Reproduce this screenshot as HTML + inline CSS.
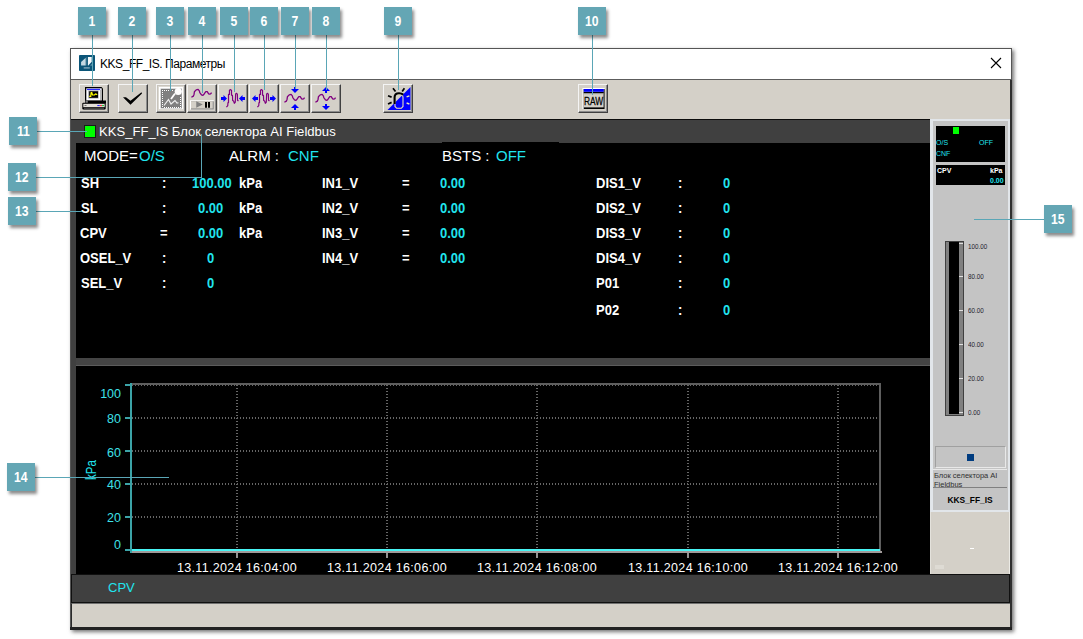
<!DOCTYPE html>
<html><head><meta charset="utf-8">
<style>
*{margin:0;padding:0;box-sizing:border-box}
html,body{width:1083px;height:639px;overflow:hidden;background:#fff;font-family:"Liberation Sans",sans-serif;position:relative}
.a{position:absolute}
.badge{position:absolute;width:28px;height:28px;background:#64a6b4;color:#fff;font-weight:bold;font-size:14px;line-height:28px;text-align:center;box-shadow:2px 3px 3px rgba(0,0,0,.45);z-index:20}
.badge span{display:inline-block;transform:scaleX(.87)}
.cl{position:absolute;background:#5aa6b6;z-index:19}
.win{position:absolute;left:70px;top:48px;width:942px;height:582px;border:1px solid #555;background:#d4d0c8;box-shadow:2px 2px 4px rgba(0,0,0,.55)}
.btn{position:absolute;top:84px;width:30px;height:29px;background:#d4d0c8;border-top:1px solid #f4f4f4;border-left:1px solid #f4f4f4;border-right:1px solid #404040;border-bottom:1px solid #404040;box-shadow:inset -1px -1px 0 #8c8c8c}
.btn svg{position:absolute;left:0;top:0}
.w{color:#fff}
.c{color:#20e4ee}
.hd{font-size:15px;position:absolute}
.bd{font-size:13px;font-weight:bold;position:absolute;line-height:15px;transform:scaleY(1.09);transform-origin:0 0}
.yl{position:absolute;color:#3ee0e8;font-size:12.5px;text-align:right;width:30px;line-height:14px}
.xl{position:absolute;color:#fff;font-size:12.5px;letter-spacing:.33px;line-height:14px;white-space:nowrap}
.tk{position:absolute;color:#1c1c2c;font-size:7.3px;line-height:8px;white-space:nowrap;transform:scaleX(.86);transform-origin:0 0}
</style></head><body>

<!-- window -->
<div class="win"></div>
<!-- title bar -->
<div class="a" style="left:71px;top:49px;width:940px;height:30px;background:#fff"></div>
<div class="a" style="left:71px;top:79px;width:940px;height:1px;background:#5c5c5c"></div>
<!-- app icon -->
<svg class="a" style="left:79px;top:55px" width="16" height="16" viewBox="0 0 16 16">
<rect width="16" height="16" rx="0.8" fill="#0b5578"/>
<path d="M2.07 7.08 L6.76 2.7 V10.5 H2.07 Z" fill="#c4d8e2"/>
<rect x="6.9" y="2.1" width="1.4" height="8.4" fill="#2e6e8c"/>
<path d="M8.95 2.07 H12.7 V6.8 L9.3 10.5 H8.95 Z" fill="#f4f8fa"/>
<path d="M11.3 10.5 L12.7 9.1 V10.5 Z" fill="#a8c4d2"/>
<rect x="4.7" y="12.2" width="6.1" height="1.4" fill="#7ea6bb"/>
</svg>
<div class="a" style="left:100px;top:57px;font-size:12px;letter-spacing:-0.45px;color:#000;line-height:15px">KKS_FF_IS. Параметры</div>
<!-- close X -->
<svg class="a" style="left:990px;top:57px" width="12" height="12" viewBox="0 0 12 12"><path d="M1 1 L11 11 M11 1 L1 11" stroke="#000" stroke-width="1.1"/></svg>

<!-- toolbar -->
<div class="a" style="left:71px;top:80px;width:939px;height:39px;background:#d4d0c8"></div>
<div class="a" style="left:1010px;top:80px;width:2px;height:549px;background:#303030"></div>

<!-- buttons -->
<div class="btn" style="left:79px"><svg width="28" height="27" viewBox="0 0 28 27">
<path d="M5 2 H21.5 L23 3.5 V17 H5 Z" fill="#000"/>
<rect x="6.3" y="3.3" width="15.4" height="12.4" fill="#fff"/>
<rect x="20" y="5" width="1.7" height="10.7" fill="#b8b8b8"/>
<rect x="7" y="3.8" width="13.2" height="1.3" fill="#2828ff"/>
<rect x="8.2" y="5.5" width="10.4" height="8" fill="#a8a8a8"/>
<rect x="9.2" y="6.3" width="8.8" height="6.5" fill="#000"/>
<path d="M9.25 11.4 H10.75 L11.1 7.75 L11.75 7.5 L12.5 10 H14.5 L15.5 9 L17.25 9.6" fill="none" stroke="#ffff00" stroke-width="1.2"/>
<rect x="5" y="15.5" width="21" height="3" fill="#000"/>
<rect x="5.5" y="15.5" width="2.3" height="2.5" fill="#808080"/>
<rect x="2.3" y="17.8" width="23.4" height="6.7" rx="1" fill="#000"/>
<rect x="3.3" y="18.8" width="21.4" height="3.4" fill="#e4e0d8"/>
<rect x="4.5" y="20" width="2" height=".8" fill="#606060"/>
<rect x="17.3" y="20" width="2.5" height="1.1" fill="#3030ff"/><rect x="19.8" y="20" width="2.2" height="1.1" fill="#ff3040"/><rect x="22" y="20" width="2" height="1.1" fill="#20d040"/>
<rect x="4" y="23.2" width="20" height="1.3" fill="#505050"/>
</svg></div>
<div class="btn" style="left:118px"><svg width="28" height="27" viewBox="0 0 28 27">
<path d="M4 12.25 H7 L11.5 15.75 L22.5 7.25 L23 8.5 L11.5 19.75 Z" fill="#000"/>
</svg></div>
<div class="btn" style="left:156px;background:#dcd9d2;box-shadow:inset -1px -1px 0 #8c8c8c, inset 1px 1px 0 #c8c4bc"><svg width="28" height="27" viewBox="0 0 28 27">
<rect x="2" y="2" width="24" height="22" fill="#fff"/>
<rect x="3.5" y="3.5" width="21.5" height="20" fill="#b8b8b8"/>
<rect x="4" y="4" width="20.5" height="19" fill="#7c7c7c"/>
<g fill="#fff" shape-rendering="crispEdges">
<path d="M5 5h1v1h-1zM7 5h1v1h-1zM9 5h1v1h-1zM11 5h1v1h-1zM13 5h1v1h-1zM15 5h1v1h-1z"/>
<path d="M5 7h1v1h-1zM5 9h1v1h-1zM5 11h1v1h-1zM5 13h1v1h-1zM5 15h1v1h-1zM5 17h1v1h-1zM5 19h1v1h-1zM5 21h1v1h-1z"/>
<path d="M7 22h1v1h-1zM9 22h1v1h-1zM11 22h1v1h-1zM13 22h1v1h-1zM15 22h1v1h-1zM17 22h1v1h-1zM19 22h1v1h-1zM21 22h1v1h-1zM23 22h1v1h-1z"/>
<path d="M23 12h1v1h-1zM23 14h1v1h-1zM23 16h1v1h-1zM23 18h1v1h-1zM23 20h1v1h-1z"/>
</g>
<rect x="6.5" y="6.5" width="16" height="15" fill="#808080"/>
<path d="M7 20.5 L11.5 14.5 L14 19 L18 15.5 L20 18 L21.5 17.75" fill="none" stroke="#f0f0f0" stroke-width="1.2"/>
<path d="M18 8.5 L14 14" stroke="#fff" stroke-width="1.8"/>
<circle cx="21.25" cy="6.5" r="3.6" fill="#fff"/>
</svg></div>
<div class="btn" style="left:187px"><svg width="28" height="27" viewBox="0 0 28 27">
<path d="M3.40 12.32 L5.32 11.12 L6.04 9.44 L6.40 6.80 L8.20 4.88 L10.12 4.40 L11.32 5.84 L11.80 7.52 L13.48 9.92 L14.93 10.40 L16.37 8.72 L17.80 6.56 L19.25 6.56 L20.20 8.24 L21.17 9.20 L22.60 8.96 L23.57 7.52" fill="none" stroke="#800080" stroke-width="1.3" stroke-linejoin="round"/>
<rect x="2" y="15.25" width="23.75" height="9.25" fill="#fff"/>
<rect x="3" y="16.25" width="22.75" height="8.25" fill="#808080"/>
<rect x="3" y="16.25" width="21.75" height="7.25" fill="#d4d0c8"/>
<path d="M8.25 16.25 L14.75 19.5 L8.25 22.75 Z" fill="#808080"/>
<rect x="17" y="17" width="2" height="5.75" fill="#000"/><rect x="20" y="17" width="2" height="5.75" fill="#000"/>
</svg></div>
<div class="btn" style="left:218px"><svg width="28" height="27" viewBox="0 0 28 27">
<path d="M7.44 22.05 L8.76 20.55 L8.95 17.54 L9.51 17.54 L9.51 9.46 L10.45 9.46 L10.45 5.32 L11.58 4.57 L12.52 5.51 L12.52 10.21 L13.46 10.40 L13.65 15.47 L14.59 16.04 L15.34 18.29 L16.28 17.17 L16.65 9.08 L17.59 8.33 L18.35 9.08 L18.53 15.29 L19.47 16.04" fill="none" stroke="#800080" stroke-width="1.2" stroke-linejoin="round"/>
<path d="M2 12 H4.5 V10 L8 13.5 L4.5 17 V15 H2 Z" fill="#0000ff"/>
<path d="M26 12 H23.5 V10 L20 13.5 L23.5 17 V15 H26 Z" fill="#0000ff"/>
</svg></div>
<div class="btn" style="left:249px"><svg width="28" height="27" viewBox="0 0 28 27">
<path d="M7.44 22.05 L8.76 20.55 L8.95 17.54 L9.51 17.54 L9.51 9.46 L10.45 9.46 L10.45 5.32 L11.58 4.57 L12.52 5.51 L12.52 10.21 L13.46 10.40 L13.65 15.47 L14.59 16.04 L15.34 18.29 L16.28 17.17 L16.65 9.08 L17.59 8.33 L18.35 9.08 L18.53 15.29 L19.47 16.04" fill="none" stroke="#800080" stroke-width="1.2" stroke-linejoin="round"/>
<path d="M8 12 H5.5 V10 L2 13.5 L5.5 17 V15 H8 Z" fill="#0000ff"/>
<path d="M20 12 H22.5 V10 L26 13.5 L22.5 17 V15 H20 Z" fill="#0000ff"/>
</svg></div>
<div class="btn" style="left:280px"><svg width="28" height="27" viewBox="0 0 28 27">
<path d="M3.40 17.32 L5.32 16.12 L6.04 14.44 L6.40 11.80 L8.20 9.88 L10.12 9.40 L11.32 10.84 L11.80 12.52 L13.48 14.92 L14.93 15.40 L16.37 13.72 L17.80 11.56 L19.25 11.56 L20.20 13.24 L21.17 14.20 L22.60 13.96 L23.57 12.52" fill="none" stroke="#800080" stroke-width="1.3" stroke-linejoin="round"/>
<path d="M13 2 H15 V4 H18 L14 8 L10 4 H13 Z" fill="#0000ff"/>
<path d="M13 25 H15 V23 H18 L14 19 L10 23 H13 Z" fill="#0000ff"/>
</svg></div>
<div class="btn" style="left:311px"><svg width="28" height="27" viewBox="0 0 28 27">
<path d="M3.40 17.32 L5.32 16.12 L6.04 14.44 L6.40 11.80 L8.20 9.88 L10.12 9.40 L11.32 10.84 L11.80 12.52 L13.48 14.92 L14.93 15.40 L16.37 13.72 L17.80 11.56 L19.25 11.56 L20.20 13.24 L21.17 14.20 L22.60 13.96 L23.57 12.52" fill="none" stroke="#800080" stroke-width="1.3" stroke-linejoin="round"/>
<path d="M13 8 H15 V6 H18 L14 2 L10 6 H13 Z" fill="#0000ff"/>
<path d="M13 19 H15 V21 H18 L14 25 L10 21 H13 Z" fill="#0000ff"/>
</svg></div>
<div class="btn" style="left:383px"><svg width="28" height="27" viewBox="0 0 28 27">
<path d="M26.5 2 V25 H3.5 Z" fill="#0000ff"/>
<path d="M11 21.5 V12.5 Q11 9.3 15 9.3 Q19 9.3 19 12.5 V21.5 L17.3 23.3 H12.7 Z" fill="none" stroke="#e8e0b8" stroke-width="1.1"/>
<path d="M10.6 19 V12.3 Q10.6 8.2 15 8.2 Q17.6 8.2 19.2 9.6" fill="none" stroke="#000" stroke-width="2.1"/>
<path d="M9 3.3 L11.5 6.5 M20.4 3.3 L18.2 6.5 M4 10.8 L7.6 12.1 M4 19 L7.6 17.4" stroke="#000" stroke-width="1.7"/>
<path d="M22.6 11.8 L25.4 10.8 M22.6 18 L25.4 19" stroke="#f0e8b0" stroke-width="1.4"/>
</svg></div>
<div class="btn" style="left:578px"><svg width="28" height="27" viewBox="0 0 28 27">
<rect x="3.4" y="3" width="22.2" height="21" fill="#fff"/>
<rect x="4.7" y="4" width="20.9" height="20" fill="#000"/>
<rect x="4.7" y="4" width="19.9" height="18.4" fill="#d4d0c8"/>
<rect x="4.7" y="4" width="20" height="2.8" fill="#0000ff"/>
<rect x="4.7" y="7" width="20" height="1.3" fill="#000"/>
<rect x="4.7" y="8.6" width="19.9" height=".6" fill="#a0a0a0"/>
<text x="14.5" y="19.9" font-family="Liberation Sans" font-size="11" text-anchor="middle" fill="#000" stroke="#000" stroke-width=".25" transform="translate(14.5 0) scale(.76 1) translate(-14.5 0)">RAW</text>
</svg></div>

<!-- main panel -->
<div class="a" style="left:71px;top:119px;width:939px;height:455px;background:#000"></div>
<div class="a" style="left:71px;top:119px;width:5px;height:455px;background:#404040"></div>
<div class="a" style="left:76px;top:119px;width:854px;height:24px;background:#404040"></div>
<div class="a" style="left:71px;top:119px;width:859px;height:1px;background:#0c0c0c"></div>
<div class="a" style="left:76px;top:358px;width:854px;height:8px;background:#444;border-bottom:1px solid #5c5c5c"></div>
<div class="a" style="left:442px;top:142px;width:117px;height:1px;background:#000"></div>
<div class="a" style="left:84px;top:125px;width:12px;height:13px;background:#00ff00;border:1px solid #1a1a1a"></div>
<div class="a w" style="left:99px;top:124px;font-size:13.1px;line-height:15px">KKS_FF_IS Блок селектора AI Fieldbus</div>

<div class="hd w" style="left:84px;top:147px;line-height:17px">MODE=</div>
<div class="hd c" style="left:139px;top:147px;line-height:17px">O/S</div>
<div class="hd w" style="left:229px;top:147px;line-height:17px">ALRM :</div>
<div class="hd c" style="left:288px;top:147px;line-height:17px">CNF</div>
<div class="hd w" style="left:442px;top:147px;line-height:17px">BSTS :</div>
<div class="hd c" style="left:496px;top:147px;line-height:17px">OFF</div>

<!-- rows col1 -->
<div class="bd w" style="left:81px;top:175px">SH</div>
<div class="bd w" style="left:162px;top:175px">:</div>
<div class="bd c" style="left:192px;top:175px">100.00</div>
<div class="bd w" style="left:239px;top:175px">kPa</div>
<div class="bd w" style="left:81px;top:200px">SL</div>
<div class="bd w" style="left:162px;top:200px">:</div>
<div class="bd c" style="left:198px;top:200px">0.00</div>
<div class="bd w" style="left:239px;top:200px">kPa</div>
<div class="bd w" style="left:80px;top:225px">CPV</div>
<div class="bd w" style="left:160px;top:225px">=</div>
<div class="bd c" style="left:198px;top:225px">0.00</div>
<div class="bd w" style="left:239px;top:225px">kPa</div>
<div class="bd w" style="left:80px;top:250px">OSEL_V</div>
<div class="bd w" style="left:162px;top:250px">:</div>
<div class="bd c" style="left:207px;top:250px">0</div>
<div class="bd w" style="left:81px;top:275px">SEL_V</div>
<div class="bd w" style="left:162px;top:275px">:</div>
<div class="bd c" style="left:207px;top:275px">0</div>
<!-- col2 -->
<div class="bd w" style="left:322px;top:175px">IN1_V</div>
<div class="bd w" style="left:402px;top:175px">=</div>
<div class="bd c" style="left:440px;top:175px">0.00</div>
<div class="bd w" style="left:322px;top:200px">IN2_V</div>
<div class="bd w" style="left:402px;top:200px">=</div>
<div class="bd c" style="left:440px;top:200px">0.00</div>
<div class="bd w" style="left:322px;top:225px">IN3_V</div>
<div class="bd w" style="left:402px;top:225px">=</div>
<div class="bd c" style="left:440px;top:225px">0.00</div>
<div class="bd w" style="left:322px;top:250px">IN4_V</div>
<div class="bd w" style="left:402px;top:250px">=</div>
<div class="bd c" style="left:440px;top:250px">0.00</div>
<!-- col3 -->
<div class="bd w" style="left:596px;top:175px">DIS1_V</div>
<div class="bd w" style="left:678px;top:175px">:</div>
<div class="bd c" style="left:723px;top:175px">0</div>
<div class="bd w" style="left:596px;top:200px">DIS2_V</div>
<div class="bd w" style="left:678px;top:200px">:</div>
<div class="bd c" style="left:723px;top:200px">0</div>
<div class="bd w" style="left:596px;top:225px">DIS3_V</div>
<div class="bd w" style="left:678px;top:225px">:</div>
<div class="bd c" style="left:723px;top:225px">0</div>
<div class="bd w" style="left:596px;top:250px">DIS4_V</div>
<div class="bd w" style="left:678px;top:250px">:</div>
<div class="bd c" style="left:723px;top:250px">0</div>
<div class="bd w" style="left:596px;top:275px">P01</div>
<div class="bd w" style="left:678px;top:275px">:</div>
<div class="bd c" style="left:723px;top:275px">0</div>
<div class="bd w" style="left:596px;top:302px">P02</div>
<div class="bd w" style="left:678px;top:302px">:</div>
<div class="bd c" style="left:723px;top:302px">0</div>

<!-- chart -->
<svg class="a" style="left:76px;top:366px" width="854" height="208" viewBox="76 366 854 208" shape-rendering="crispEdges">
<g stroke="#666" stroke-width="2" stroke-dasharray="1 2" fill="none">
<path d="M132 385 H879 M132 418 H879 M132 451 H879 M132 484 H879 M132 517 H879"/>
<path d="M237 385 V549 M387 385 V549 M537 385 V549 M688 385 V549 M838 385 V549"/>
</g>
<rect x="130" y="383" width="751" height="2" fill="#5e5e5e"/>
<rect x="879" y="383" width="2" height="170" fill="#5e5e5e"/>
<rect x="130" y="551" width="752" height="2" fill="#a09a9a"/>
<rect x="130" y="549" width="750" height="2" fill="#48f4f4"/>
<g fill="#909090"><rect x="236" y="553" width="2" height="5"/><rect x="386" y="553" width="2" height="5"/><rect x="536" y="553" width="2" height="5"/><rect x="687" y="553" width="2" height="5"/><rect x="837" y="553" width="2" height="5"/></g>
<rect x="130" y="383" width="2" height="170" fill="#3ca4a8"/>
<g fill="#3ca4a8"><rect x="125" y="384" width="5" height="2"/><rect x="125" y="417" width="5" height="2"/><rect x="125" y="450" width="5" height="2"/><rect x="125" y="483" width="5" height="2"/><rect x="125" y="516" width="5" height="2"/><rect x="125" y="549" width="5" height="2"/></g>
</svg>
<div class="yl" style="left:91px;top:387px">100</div>
<div class="yl" style="left:91px;top:412px">80</div>
<div class="yl" style="left:91px;top:445.5px">60</div>
<div class="yl" style="left:91px;top:478px">40</div>
<div class="yl" style="left:91px;top:511px">20</div>
<div class="yl" style="left:91px;top:538px">0</div>
<div class="a c" style="left:79.5px;top:463px;font-size:11.5px;line-height:14px;transform:rotate(-90deg) scale(1,1.2);transform-origin:center;width:22px;text-align:center">kPa</div>
<div class="xl" style="left:177px;top:561px">13.11.2024 16:04:00</div>
<div class="xl" style="left:327px;top:561px">13.11.2024 16:06:00</div>
<div class="xl" style="left:477px;top:561px">13.11.2024 16:08:00</div>
<div class="xl" style="left:628px;top:561px">13.11.2024 16:10:00</div>
<div class="xl" style="left:778px;top:561px">13.11.2024 16:12:00</div>

<!-- right panel -->
<div class="a" style="left:930px;top:119px;width:80px;height:394px;background:#c4c4c4;border:3px solid #e2e6ea;border-top-width:2px;border-right-width:2px"></div>
<div class="a" style="left:930px;top:512px;width:80px;height:62px;background:#d4d0c8;border-left:1px solid #e4e2dc;border-right:1px solid #ecebe6"></div>
<div class="a" style="left:970px;top:548px;width:4px;height:1px;background:#fff"></div>
<div class="a" style="left:935px;top:565px;width:9px;height:4px;background:#dedbd4"></div>
<div class="a" style="left:936px;top:126px;width:69px;height:36px;background:#000"></div>
<div class="a" style="left:953px;top:127px;width:6px;height:7px;background:#00ff00"></div>
<div class="a c" style="left:936px;top:139px;font-size:7px;line-height:8px">O/S</div>
<div class="a c" style="left:979px;top:139px;font-size:7px;line-height:8px">OFF</div>
<div class="a c" style="left:936px;top:150px;font-size:7px;line-height:8px">CNF</div>
<div class="a" style="left:936px;top:165px;width:69px;height:20px;background:#000"></div>
<div class="a w" style="left:937px;top:167px;font-size:7px;font-weight:bold;line-height:8px">CPV</div>
<div class="a w" style="left:990px;top:167px;font-size:7px;font-weight:bold;line-height:8px">kPa</div>
<div class="a c" style="left:990px;top:177px;font-size:7px;font-weight:bold;line-height:8px">0.00</div>
<!-- bar -->
<div class="a" style="left:945px;top:241px;width:19px;height:175px;background:#808080;border:1px solid #404040"></div>
<div class="a" style="left:949px;top:242px;width:10px;height:172px;background:#000"></div>
<div class="a" style="left:959px;top:243px;width:4px;height:1px;background:#e0e0e0"></div>
<div class="a" style="left:959px;top:276px;width:4px;height:1px;background:#e0e0e0"></div>
<div class="a" style="left:959px;top:310px;width:4px;height:1px;background:#e0e0e0"></div>
<div class="a" style="left:959px;top:344px;width:4px;height:1px;background:#e0e0e0"></div>
<div class="a" style="left:959px;top:378px;width:4px;height:1px;background:#e0e0e0"></div>
<div class="a" style="left:959px;top:412px;width:4px;height:1px;background:#e0e0e0"></div>
<div class="tk" style="left:968px;top:243px">100.00</div>
<div class="tk" style="left:968px;top:273px">80.00</div>
<div class="tk" style="left:968px;top:307px">60.00</div>
<div class="tk" style="left:968px;top:341px">40.00</div>
<div class="tk" style="left:968px;top:375px">20.00</div>
<div class="tk" style="left:968px;top:409px">0.00</div>
<!-- sunken box -->
<div class="a" style="left:935px;top:446px;width:71px;height:22px;border:1px solid #a0a0a0;border-right-color:#e8e8e8;border-bottom-color:#e8e8e8"></div>
<div class="a" style="left:967px;top:454px;width:7px;height:7px;background:#003c80"></div>
<div class="a" style="left:933px;top:469px;width:74px;height:1px;background:#e8e8e8"></div>
<div class="a" style="left:934px;top:471px;font-size:7.5px;line-height:9px;color:#303030;width:72px">Блок селектора AI Fieldbus</div>
<div class="a" style="left:933px;top:487px;width:74px;height:1px;background:#808080"></div>
<div class="a" style="left:933px;top:495px;width:74px;text-align:center;font-size:8.4px;font-weight:bold;line-height:10px;color:#000">KKS_FF_IS</div>

<!-- status bars -->
<div class="a" style="left:71px;top:574px;width:939px;height:29px;background:#404040;border:1px solid #101010"></div>
<div class="a c" style="left:108px;top:580px;font-size:13px;line-height:16px">CPV</div>
<div class="a" style="left:71px;top:603px;width:939px;height:25px;background:#d4d0c8;border-top:1px solid #707070;border-left:1px solid #2a2a2a;border-bottom:1px solid #ebe8e0"></div>
<div class="a" style="left:70px;top:627px;width:942px;height:3px;background:#222"></div>

<!-- badges -->
<div class="cl" style="left:92px;top:35px;width:1px;height:51px"></div>
<div class="cl" style="left:132px;top:35px;width:1px;height:57px"></div>
<div class="cl" style="left:170px;top:35px;width:1px;height:56px"></div>
<div class="cl" style="left:202px;top:35px;width:1px;height:58px"></div>
<div class="cl" style="left:234px;top:35px;width:1px;height:57px"></div>
<div class="cl" style="left:264px;top:35px;width:1px;height:55px"></div>
<div class="cl" style="left:295px;top:35px;width:1px;height:54px"></div>
<div class="cl" style="left:326px;top:35px;width:1px;height:55px"></div>
<div class="cl" style="left:398px;top:35px;width:1px;height:55px"></div>
<div class="cl" style="left:592px;top:35px;width:1px;height:60px"></div>
<div class="cl" style="left:37px;top:131px;width:50px;height:1px"></div>
<div class="cl" style="left:36px;top:177px;width:166px;height:1px"></div>
<div class="cl" style="left:201px;top:134px;width:1px;height:44px"></div>
<div class="cl" style="left:36px;top:211px;width:46px;height:1px"></div>
<div class="cl" style="left:35px;top:477px;width:134px;height:1px"></div>
<div class="cl" style="left:974px;top:219px;width:70px;height:1px"></div>

<div class="badge" style="left:78px;top:7px"><span>1</span></div>
<div class="badge" style="left:118px;top:7px"><span>2</span></div>
<div class="badge" style="left:156px;top:7px"><span>3</span></div>
<div class="badge" style="left:188px;top:7px"><span>4</span></div>
<div class="badge" style="left:220px;top:7px"><span>5</span></div>
<div class="badge" style="left:250px;top:7px"><span>6</span></div>
<div class="badge" style="left:281px;top:7px"><span>7</span></div>
<div class="badge" style="left:312px;top:7px"><span>8</span></div>
<div class="badge" style="left:384px;top:7px"><span>9</span></div>
<div class="badge" style="left:578px;top:7px"><span>10</span></div>
<div class="badge" style="left:9px;top:117px"><span>11</span></div>
<div class="badge" style="left:8px;top:163px"><span>12</span></div>
<div class="badge" style="left:8px;top:197px"><span>13</span></div>
<div class="badge" style="left:7px;top:463px"><span>14</span></div>
<div class="badge" style="left:1044px;top:205px"><span>15</span></div>

</body></html>
